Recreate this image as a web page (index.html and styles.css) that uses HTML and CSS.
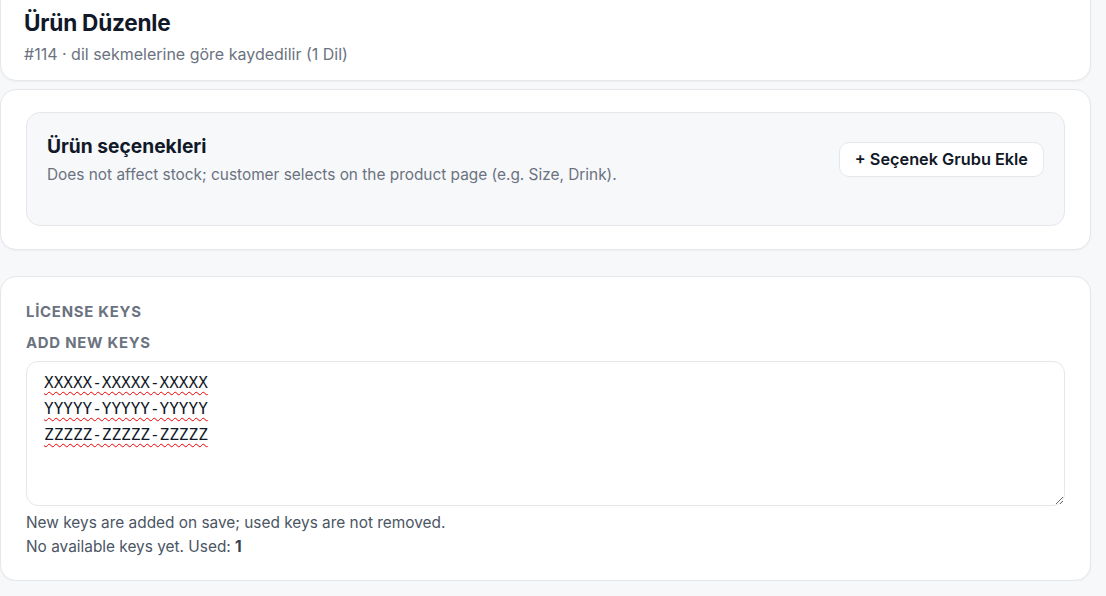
FILE: index.html
```html
<!doctype html>
<html lang="tr">
<head>
  <meta charset="UTF-8">
  <title>Ürün Düzenle</title>
  <link rel="stylesheet" href="styles.css">
</head>
<body>
  <div class="page">
    <div class="card head-card">
      <h1 class="page-title">Ürün Düzenle</h1>
      <div class="page-sub">#114 · dil sekmelerine göre kaydedilir (1 Dil)</div>
    </div>

    <div class="card options-card">
      <div class="options-box">
        <div class="options-head">
          <div>
            <h2 class="options-title">Ürün seçenekleri</h2>
            <div class="options-desc">Does not affect stock; customer selects on the product page (e.g. Size, Drink).</div>
          </div>
          <button class="btn" type="button">+ Seçenek Grubu Ekle</button>
        </div>
      </div>
    </div>

    <div class="card keys-card">
      <div class="label">Lİcense keys</div>
      <label class="label label-sm" for="newKeys">Add new keys</label>
      <textarea id="newKeys" class="keys-input">XXXXX-XXXXX-XXXXX
YYYYY-YYYYY-YYYYY
ZZZZZ-ZZZZZ-ZZZZZ</textarea>
      <p class="hint">New keys are added on save; used keys are not removed.</p>
      <p class="hint">No available keys yet. Used: <b>1</b></p>
    </div>
  </div>
</body>
</html>
```

FILE: styles.css
```css
:root {
  --bg: #f7f8fa;
  --card: #ffffff;
  --border: #e5e7eb;
  --text: #111827;
  --muted: #6b7280;
  --soft: #4b5563;
  --font: Inter, "Noto Sans", Arial, sans-serif;
}

* {
  box-sizing: border-box;
}

body {
  margin: 0;
  background: var(--bg);
  font-family: var(--font);
  color: var(--text);
  overflow: hidden;
}

.page {
  display: flex;
  flex-direction: column;
  gap: 8px;
  width: 1091px;
  margin-top: -14px;
}

.card {
  background: var(--card);
  border: 1px solid var(--border);
  border-radius: 16px;
  box-shadow: 0 1px 2px rgba(16, 24, 40, 0.04);
}

.head-card {
  padding: 22px 23px 16px;
}

.page-title {
  margin: 0;
  font-size: 22.6px;
  line-height: 28px;
  font-weight: 700;
  letter-spacing: -0.01em;
}

.page-sub {
  margin-top: 7px;
  font-size: 16px;
  line-height: 20px;
  color: var(--muted);
}

/* options */
.options-card {
  padding: 22px 25px 23px;
  margin-bottom: 18px;
}

.options-box {
  background: var(--bg);
  border: 1px solid var(--border);
  border-radius: 14px;
  padding: 20px 20px 40px;
}

.options-head {
  display: flex;
  align-items: center;
  justify-content: space-between;
}

.options-title {
  margin: 0;
  font-size: 19.2px;
  line-height: 26px;
  font-weight: 700;
}

.options-desc {
  margin-top: 6px;
  font-size: 15.4px;
  line-height: 20px;
  color: var(--muted);
}

.btn {
  font-family: var(--font);
  font-size: 16.3px;
  font-weight: 600;
  color: var(--text);
  background: #fff;
  border: 1px solid var(--border);
  border-radius: 10px;
  height: 35px;
  padding: 0 15px;
  cursor: pointer;
}

/* license keys */
.keys-card {
  display: flex;
  flex-direction: column;
  padding: 26px 25px 21px;
}

.label {
  font-size: 14.9px;
  line-height: 18px;
  font-weight: 700;
  letter-spacing: 0.05em;
  text-transform: uppercase;
  color: var(--muted);
}

.label-sm {
  margin-top: 13px;
}

.keys-input {
  margin-top: 9px;
  height: 145px;
  padding: 8px 17px;
  border: 1px solid var(--border);
  border-radius: 12px;
  font-family: "DejaVu Sans Mono", monospace;
  font-size: 16px;
  line-height: 26px;
  color: var(--text);
  resize: vertical;
  outline: none;
  text-decoration: underline wavy #f00000;
  text-decoration-thickness: 1.3px;
  text-underline-offset: 3px;
}

.hint {
  margin: 0;
  font-size: 15.4px;
  line-height: 24px;
  color: var(--soft);
}

.keys-input + .hint {
  margin-top: 5px;
}

.hint b {
  color: #374151;
}
```
